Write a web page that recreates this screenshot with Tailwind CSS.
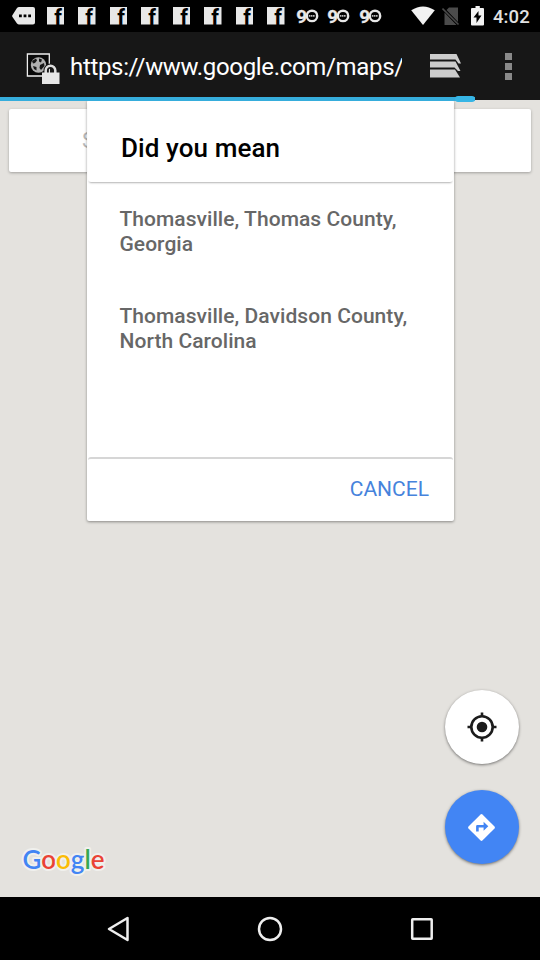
<!DOCTYPE html>
<html lang="en">
<head>
<meta charset="utf-8">
<title>Google Maps</title>
<script src="https://cdn.jsdelivr.net/npm/@tailwindcss/browser@4"></script>
</head>
<body class="flex h-[960px] w-[540px] flex-col overflow-hidden bg-[#e4e2de] font-[Roboto,sans-serif]">
<svg class="absolute h-0 w-0" aria-hidden="true">
  <defs>
    <g id="fb"><path fill="#e8e8e8" d="M0 0h17.5v17.5H0z"/><text x="7.2" y="18.3" font-family="Roboto, sans-serif" font-weight="700" font-size="21.5" fill="#000">f</text></g>
    <g id="ninety"><text x="-.8" y="13.6" font-family="Roboto, sans-serif" font-weight="700" font-size="19" fill="#e8e8e8" stroke="#e8e8e8" stroke-width=".3">9</text><circle cx="15" cy="6.9" r="5.2" fill="#000" stroke="#e8e8e8" stroke-width="2.4"/><path stroke="#bbb" stroke-width="1.8" stroke-dasharray="1.6 .5" d="M11.8 6.9h6.4"/></g>
  </defs>
</svg>
<header class="flex h-8 shrink-0 items-center bg-black pl-2">
  <div class="flex w-[31.5px] justify-center"><svg width="23" height="18"><path fill="#e8e8e8" d="M7 0h14q2 0 2 2v13.500q0 2-2 2H7q-1 0-2-1L.5 10q-.7-1 0-2L5 1q1-1 2-1z"/><path fill="#000" d="M7 7.500h2.800v2.800H7zm4.600 0h2.800v2.800h-2.800zm4.600 0H19v2.800h-2.800z"/></svg></div>
  <div class="flex w-[252px] justify-around">
    <svg width="17.5" height="18"><use href="#fb"/></svg><svg width="17.5" height="18"><use href="#fb"/></svg><svg width="17.5" height="18"><use href="#fb"/></svg><svg width="17.5" height="18"><use href="#fb"/></svg><svg width="17.5" height="18"><use href="#fb"/></svg><svg width="17.5" height="18"><use href="#fb"/></svg><svg width="17.5" height="18"><use href="#fb"/></svg><svg width="17.5" height="18"><use href="#fb"/></svg>
  </div>
  <div class="flex w-[94.5px] justify-around">
    <svg class="overflow-visible" width="21.5" height="14"><use href="#ninety"/></svg><svg class="overflow-visible" width="21.5" height="14"><use href="#ninety"/></svg><svg class="overflow-visible" width="21.5" height="14"><use href="#ninety"/></svg>
  </div>
  <svg class="ml-[25px]" width="24" height="20" viewBox="0 0 24 20"><path fill="#f2f2f2" d="M.2 4.300Q12-3.300 23.800 4.300L12 19z"/></svg>
  <svg class="ml-[7px]" width="18" height="19" viewBox="0 0 18 19"><path fill="#4b4b4b" d="M7 .5h9V15L4.500 3zM2.500 5.500 14.500 18h-12z"/><path stroke="#4b4b4b" stroke-width="1.600" d="m.5 1.500 16 16"/></svg>
  <svg class="ml-[11px]" width="14" height="20" viewBox="0 0 14 20"><path fill="#f2f2f2" d="M4.500 0h4.300v2H12q1 0 1 1v15.500q0 1-1 1H1q-1 0-1-1V3q0-1 1-1h3.500z"/><path fill="#000" d="M7.500 5v4.500h3L5.500 17v-5.500h-3z"/></svg>
  <span class="ml-[8px] mt-[2px] text-[18.500px] font-medium leading-none tracking-[.1px] text-[#e2e2e2]">4:02</span>
</header>
<div class="relative z-20 flex h-[68px] shrink-0 items-center bg-[#171717]">
  <svg class="ml-[26px] mt-[5px]" width="34" height="32" viewBox="0 0 34 32">
    <path fill="#080808" stroke="#eee" stroke-width="1.300" d="M1.400 1h21.900v22H1.400z"/>
    <circle cx="12.500" cy="12" r="7.700" fill="#b0b0b0"/>
    <path fill="#171717" d="m6 8 4-2.500 1 2-2 2.500-2 .5zm7-2.500 3 1-1 3-2-1zm1 6.500 4-2 .5 3-3.500 4-1.500-2zm-7 1 3.500 1v3.500L8 16z"/>
    <path fill="none" stroke="#171717" stroke-width="5" d="M20 22v-4.500a4.500 4.500 0 0 1 9 0V22"/>
    <path fill="none" stroke="#ddd" stroke-width="2.500" d="M19.700 22v-4.500a4.800 4.800 0 0 1 9.600 0V22"/>
    <path fill="#e6e6e6" d="M16 19.500h17.500V31H16z"/>
  </svg>
  <div class="ml-[10px] mt-px w-[332px] overflow-hidden whitespace-nowrap text-[24px] leading-8 tracking-[-.33px] text-white">https://www.google.com/maps/</div>
  <svg class="ml-[28px]" width="32" height="24" viewBox="0 0 32 24"><path fill="#ccc" d="M0 0h26.500L31 9.500h-2.500l-3-4H0zM0 7.500h25.500l5 9.500H28l-3.500-3.500H0zM0 15.500h25L30 23.500H0z"/></svg>
  <svg class="ml-[43px]" width="7" height="27"><path fill="#898989" d="M0 0h7v7H0zm0 10h7v7H0zm0 10h7v7H0z"/></svg>
  <div class="absolute left-0 top-[65px] h-1 w-[475px] bg-[#36addc]"></div>
  <div class="absolute left-[455px] top-[64px] h-[6px] w-5 rounded-sm bg-[#36b5e5] blur-[.7px]"></div>
</div>
<main class="relative h-[797px] shrink-0 px-[9px] pt-[9px]">
  <div class="flex h-[63px] w-[522px] items-center rounded-[2px] bg-white pl-[73px] text-[22px] text-[#b8b8b8] shadow-[0_1px_3px_rgba(0,0,0,.3)]">S</div>
  <section class="absolute left-[87px] top-0 flex h-[421px] w-[367px] flex-col rounded-[2px] bg-white shadow-[0_1px_3px_rgba(0,0,0,.4)]">
    <h1 class="mx-px flex h-[82px] shrink-0 items-center rounded-[3px] pl-[33px] pt-[15px] text-[26px] font-medium tracking-[.1px] text-black shadow-[0_2px_2px_-1px_rgba(0,0,0,.3)]"><span class="whitespace-nowrap">Did you mean</span></h1>
    <ul class="grow pl-[32.500px] pt-[25px] text-[21px] font-medium leading-[25px] tracking-[.05px] text-[#676767]">
      <li class="mb-[47px] whitespace-nowrap">Thomasville, Thomas County,<br>Georgia</li>
      <li class="whitespace-nowrap">Thomasville, Davidson County,<br>North Carolina</li>
    </ul>
    <div class="mx-px flex h-[64px] shrink-0 items-center justify-end rounded-[3px] border-t-2 border-[#d6d6d6] pr-6 text-[21px] text-[#4683dc]"><button>CANCEL</button></div>
  </section>
  <div class="absolute right-[21.5px] top-[590px] flex flex-col gap-[26px]">
    <button class="flex h-[74px] w-[74px] items-center justify-center rounded-full bg-white shadow-[0_1px_3px_rgba(0,0,0,.5)]">
      <svg width="30" height="30" viewBox="0 0 30 30"><circle cx="15" cy="15" r="5.300" fill="#1c1c1c"/><circle cx="15" cy="15" r="10.700" fill="none" stroke="#1c1c1c" stroke-width="2.600"/><path stroke="#1c1c1c" stroke-width="2.600" d="M15 .5V5m0 20v4.500M.5 15H5m20 0h4.500"/></svg>
    </button>
    <button class="flex h-[74px] w-[74px] items-center justify-center rounded-full bg-[#4285f4] shadow-[0_1px_3px_rgba(0,0,0,.5)]">
      <svg width="27" height="27" viewBox="0 0 27 27"><path fill="#fff" d="m12.600.5q.9-.8 1.800 0l12.100 12.100q.8.900 0 1.800L14.400 26.500q-.9.800-1.800 0L.5 14.400q-.8-.9 0-1.800z"/><path fill="#4285f4" d="M8.100 17.500v-5.200q0-1.300 1.300-1.300h6.200V7.800l4.700 4.500-4.700 4.500v-3.200h-4.900v3.900z"/></svg>
    </button>
  </div>
  <svg class="absolute left-[18px] top-[740px]" width="94" height="44" viewBox="0 0 94 44" aria-label="Google"><text x="4.500" y="29.300" font-family="Lato, sans-serif" font-size="27" font-weight="600" textLength="82" lengthAdjust="spacingAndGlyphs" stroke="#f0f0ed" stroke-width="4" stroke-linejoin="round" paint-order="stroke"><tspan fill="#4285f4">G</tspan><tspan fill="#ea4335">o</tspan><tspan fill="#fbbc05">o</tspan><tspan fill="#4285f4">g</tspan><tspan fill="#34a853">l</tspan><tspan fill="#ea4335">e</tspan></text></svg>
</main>
<nav class="flex h-[63px] shrink-0 items-center justify-between bg-black pl-[107px] pr-[106px]">
  <svg width="23" height="26" viewBox="0 0 23 26"><path fill="none" stroke="#eee" stroke-width="2.500" stroke-linejoin="round" d="M2 13 20.500 2v22z"/></svg>
  <svg width="26" height="26"><circle cx="13" cy="13" r="11" fill="none" stroke="#eee" stroke-width="2.500"/></svg>
  <svg width="24" height="24"><rect x="2.200" y="2.200" width="19.500" height="19.500" rx=".5" fill="none" stroke="#eee" stroke-width="2.500"/></svg>
</nav>
</body>
</html>
